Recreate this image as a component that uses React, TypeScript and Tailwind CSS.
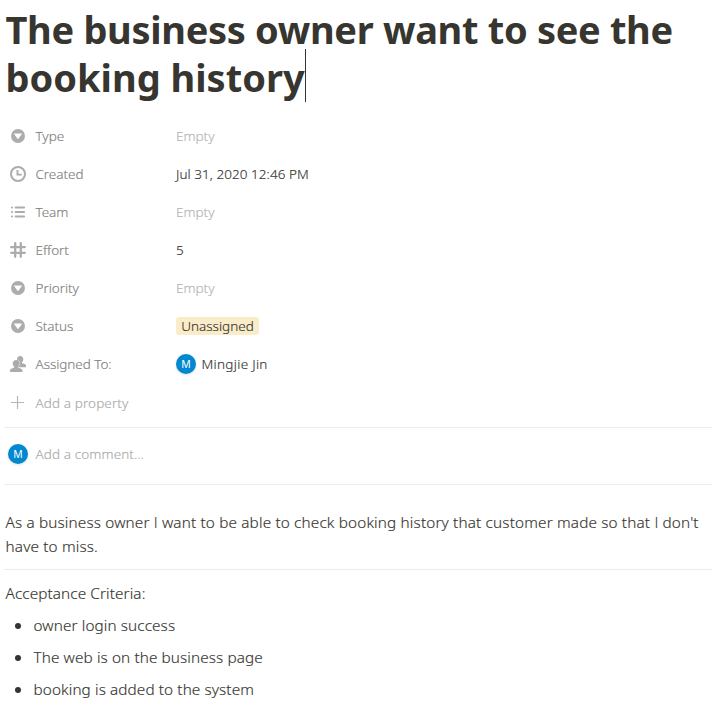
import type { ReactNode } from "react";

function SelectIcon() {
  return (
    <svg viewBox="0 0 14 14" className="size-4 fill-[#adacaa]">
      <path
        fillRule="evenodd"
        d="M7 13.1a6.1 6.1 0 1 0 0-12.2a6.1 6.1 0 0 0 0 12.2ZM3.6 5.25A.25.25 0 0 1 3.8 4.85h6.4a.25.25 0 0 1 .2.4L7.2 9.7a.25.25 0 0 1-.4 0Z"
      />
    </svg>
  );
}

function ClockIcon() {
  return (
    <svg viewBox="0 0 16 16" className="size-4 fill-none stroke-[#adacaa]">
      <circle cx="8" cy="8" r="7" strokeWidth="2" />
      <path d="M7.5 4v4.6H11.8" strokeWidth="1.9" />
    </svg>
  );
}

function ListIcon() {
  return (
    <svg viewBox="0 0 16 16" className="size-4 fill-[#adacaa]">
      {[3.5, 8, 12.5].map((y) => (
        <g key={y}>
          <rect x="1" y={y - 1} width="2" height="2" rx="0.8" />
          <rect x="4.7" y={y - 1} width="10.3" height="2" rx="0.8" />
        </g>
      ))}
    </svg>
  );
}

function HashIcon() {
  return (
    <svg viewBox="0 0 16 16" className="size-4 fill-none stroke-[#adacaa] stroke-[2.3]" strokeLinecap="round">
      <path d="M5.2 1.2v13.6M10.8 1.2v13.6M1.2 5.2h13.6M1.2 10.8h13.6" />
    </svg>
  );
}

function PeopleIcon() {
  return (
    <svg viewBox="0 0 16 16" className="size-4 fill-[#adacaa]">
      <path d="M10.2 0C8.3 0 7 1.4 7 3.3c0 1.3.6 2.4 1.3 3.1v4.8H16v-.8c0-1.2-.5-1.9-1.5-2.3l-2.5-1.1v-.8c.8-.6 1.3-1.7 1.3-2.9C13.3 1.4 12.1 0 10.2 0Z" />
      <path
        className="stroke-white stroke-[0.9] [paint-order:stroke]"
        d="M6.2 4C4.2 4 2.7 5.4 2.7 7.4c0 1.3.6 2.4 1.5 3.1v.9l-2.9 1.3C.4 13.1 0 13.8 0 15v1h12.4v-1c0-1.2-.4-1.9-1.3-2.3l-2.9-1.3v-.9c.9-.7 1.5-1.8 1.5-3.1C9.7 5.4 8.2 4 6.2 4Z"
      />
    </svg>
  );
}

function Avatar() {
  return (
    <span className="flex size-5 shrink-0 items-center justify-center rounded-full bg-[#0288d1] text-[10.5px] leading-none font-normal text-white shadow-[0_1px_3px_rgba(15,15,15,0.12)] [-webkit-text-stroke-width:0px]">
      M
    </span>
  );
}

function Empty() {
  return <span className="pt-px text-[#b6b5b3]">Empty</span>;
}

function Property({ icon, label, children }: { icon: ReactNode; label: string; children: ReactNode }) {
  return (
    <div className="flex h-[38px] items-center text-[13.5px] whitespace-nowrap">
      <div className="ml-2.5 flex w-[166px] items-center gap-[9.5px] text-[#82817d]">
        {icon}
        <span className="pt-px tracking-[-0.05px]">{label}</span>
      </div>
      {children}
    </div>
  );
}

// Sans capital without crossbars for the pronoun.
function PronounI() {
  return <span className="font-['Open_Sans',sans-serif]">I</span>;
}

export default function App() {
  return (
    <main className="h-[704px] w-[724px] overflow-hidden bg-white pt-[5px] font-['Noto_Sans',sans-serif] font-light text-[#373530] [-webkit-text-stroke-width:0.15px]">
      <h1 className="pl-[5.5px] text-[38px] leading-[48px] font-bold tracking-[-0.32px] whitespace-nowrap [-webkit-text-stroke-width:0px]">
        The business owner want to see the
        <br />
        <span className="relative tracking-[0px]">
          booking history
          <span className="absolute -top-0.5 -right-px h-[53px] w-px bg-[#373530]" />
        </span>
      </h1>

      <section className="mt-4">
        <Property icon={<SelectIcon />} label="Type"><Empty /></Property>
        <Property icon={<ClockIcon />} label="Created"><span className="pt-px tracking-[0.05px]">Jul 31, 2020 12:46 PM</span></Property>
        <Property icon={<ListIcon />} label="Team"><Empty /></Property>
        <Property icon={<HashIcon />} label="Effort"><span className="pt-px">5</span></Property>
        <Property icon={<SelectIcon />} label="Priority"><Empty /></Property>
        <Property icon={<SelectIcon />} label="Status">
          <span className="flex h-[18px] w-[83px] items-center justify-center rounded-[3px] bg-[#fbecc9] pt-px">Unassigned</span>
        </Property>
        <Property icon={<PeopleIcon />} label="Assigned To:">
          <Avatar />
          <span className="ml-[5.5px] pt-px tracking-[0.3px]">Mingjie Jin</span>
        </Property>
      </section>

      <div className="mt-px flex h-[38px] items-center pl-2.5 text-[13.5px] text-[#acaba9]">
        <svg viewBox="0 0 16 16" className="mr-[9.5px] size-4 fill-none stroke-[#b8b7b5]">
          <path d="M7.5 1v13M1 7.5h13" strokeWidth="1.2" />
        </svg>
        <span className="pt-px tracking-[0.1px]">Add a property</span>
      </div>

      <hr className="mt-[5px] mr-3 ml-1 border-[#ececeb]" />
      <div className="flex h-[52px] items-center gap-[7.5px] pl-2 text-[13.5px] text-[#acaba9]">
        <Avatar />
        <span className="pt-px tracking-[0.1px]">Add a comment…</span>
      </div>
      <hr className="mt-1 mr-3 ml-1 border-[#ececeb]" />

      <p className="mt-[25px] pl-[5.5px] text-[15.3px] leading-6 tracking-[0.16px] whitespace-nowrap">
        As a business owner <PronounI /> want to be able to check booking history that customer made so that <PronounI /> don't
        <br />
        have to miss.
      </p>
      <hr className="mt-[11px] mr-3 ml-1 border-[#ececeb]" />

      <p className="mt-[11px] pl-[5.5px] text-[15.3px] leading-6 tracking-[0.1px]">Acceptance Criteria:</p>
      <ul className="mt-2 flex flex-col gap-2 text-[15.3px] leading-6 tracking-[0.11px]">
        {["owner login success", "The web is on the business page", "booking is added to the system"].map((item) => (
          <li key={item} className="flex items-center pl-[15px]">
            <span className="mt-px mr-[12.5px] size-1.5 rounded-full bg-[#373530]" />
            {item}
          </li>
        ))}
      </ul>
    </main>
  );
}
